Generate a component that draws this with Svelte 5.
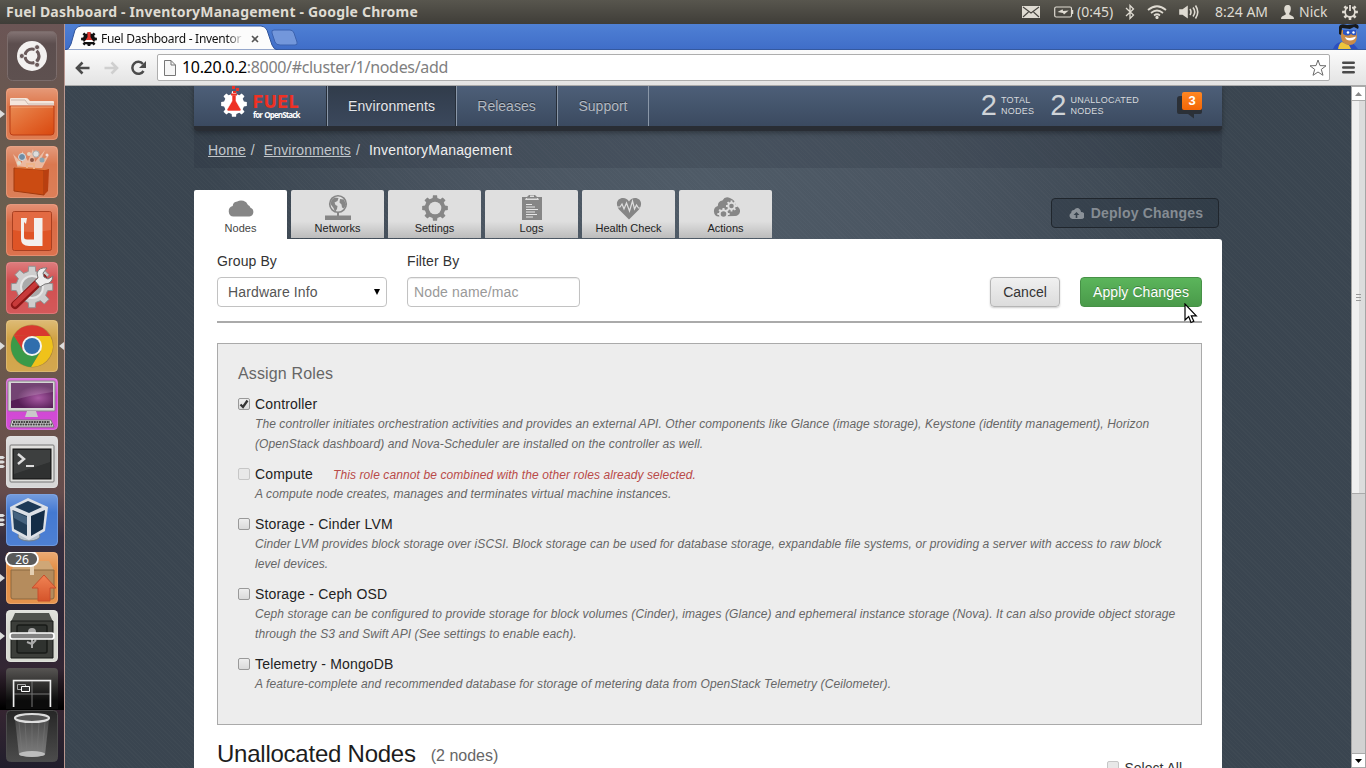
<script>
  const launcher = [
    { id: 'dash' },
    { id: 'files', c: '#dc7143', left: 1 },
    { id: 'store', c: '#d9744a' },
    { id: 'one', c: '#d9663f' },
    { id: 'settings', c: '#d04a4b' },
    { id: 'chrome', c: '#d0a040', left: 1, right: true },
    { id: 'display', c: '#cf3fd2' },
    { id: 'terminal', c: '#d4d4d4', left: 3 },
    { id: 'vbox', c: '#3e75d0', left: 3 },
    { id: 'update', c: '#e3893d', left: 1 },
    { id: 'safe', c: '#d5d7cf', left: 1 }
  ];
  const tabs = ['Nodes', 'Networks', 'Settings', 'Logs', 'Health Check', 'Actions'];
  const roles = [
    { name: 'Controller', checked: true, text: ['The controller initiates orchestration activities and provides an external API. Other components like Glance (image storage), Keystone (identity management), Horizon', '(OpenStack dashboard) and Nova-Scheduler are installed on the controller as well.'] },
    { name: 'Compute', disabled: true, warn: 'This role cannot be combined with the other roles already selected.', text: ['A compute node creates, manages and terminates virtual machine instances.'] },
    { name: 'Storage - Cinder LVM', text: ['Cinder LVM provides block storage over iSCSI. Block storage can be used for database storage, expandable file systems, or providing a server with access to raw block', 'level devices.'] },
    { name: 'Storage - Ceph OSD', text: ['Ceph storage can be configured to provide storage for block volumes (Cinder), images (Glance) and ephemeral instance storage (Nova). It can also provide object storage', 'through the S3 and Swift API (See settings to enable each).'] },
    { name: 'Telemetry - MongoDB', text: ['A feature-complete and recommended database for storage of metering data from OpenStack Telemetry (Ceilometer).'] }
  ];
  // Toothed wheel outline around (cx, cy)
  function gear(cx, cy, ro, ri, n) {
    let d = '';
    const s = (Math.PI * 2) / n;
    for (let i = 0; i < n; i++) {
      const a = i * s - Math.PI / 2;
      [[-0.3, ri], [-0.2, ro], [0.2, ro], [0.3, ri]].forEach(([k, r], j) => {
        d += (i === 0 && j === 0 ? 'M' : 'L') + (cx + r * Math.cos(a + k * s)).toFixed(2) + ' ' + (cy + r * Math.sin(a + k * s)).toFixed(2);
      });
    }
    return d + 'Z';
  }
</script>

{#snippet tile(item)}
  <svg class="tile" width="64" height="52" viewBox="0 0 64 52">
    {#if item.c}
      <rect x="6" y="0" width="52" height="52" rx="4.5" fill={item.c} />
      <rect x="6.5" y=".5" width="51" height="51" rx="4" fill="url(#gloss)" stroke="#fff" stroke-opacity=".22" />
    {/if}
    {#if item.left === 1}<path d="M0 22v8l5-4z" fill="#dcdcdc" />{/if}
    {#if item.left === 3}<path d="M0 20h3l2 1.500-2 1.500H0zM0 24.500h3l2 1.500-2 1.500H0zM0 29h3l2 1.500-2 1.500H0z" fill="#dcdcdc" />{/if}
    {#if item.right}<path d="M64 22v8l-5-4z" fill="#dcdcdc" />{/if}
    {#if item.id === 'dash'}
      <rect x="7.500" y="1.500" width="49" height="49" rx="5" fill="url(#dashg)" stroke="#7b6c6b" />
      <circle cx="32" cy="26" r="15" fill="#f3f1f0" />
      <circle cx="32" cy="26" r="7" fill="none" stroke="#6a5a5a" stroke-width="3.200" stroke-dasharray="12.600 2.060" stroke-dashoffset="-8.360" />
      <g fill="#6a5a5a" stroke="#f3f1f0" stroke-width=".8"><circle cx="21.800" cy="26" r="2.500" /><circle cx="37.100" cy="17.200" r="2.500" /><circle cx="37.100" cy="34.800" r="2.500" /></g>
    {:else if item.id === 'files'}
      <path d="M10 18v-7q0-1 1-1h15q2 0 3 2l1 1h23q1 0 1 1v4z" fill="#f4e6dc" /><path d="M11 12h14l3 4h26" fill="none" stroke="#cbbab0" />
      <path d="M10 18h44v26q0 3-3 3H13q-3 0-3-3z" fill="url(#folder)" stroke="#ba3c14" /><path d="M11 19h42" stroke="#f6a77b" />
    {:else if item.id === 'store'}
      <path d="M18 22l-5-14 9 9 0-12 6 10 5-12 2 13 10-12-5 12 9-7-7 13z" fill="#f5dac8" opacity=".65" />
      <circle cx="22" cy="11" r="3.500" fill="#6d8ca5" stroke="#d9dfe2" /><circle cx="29" cy="8" r="2" fill="#e7d1bc" /><circle cx="36" cy="8" r="3.200" fill="#ddd" stroke="#a9a9a9" /><circle cx="19" cy="17" r="2" fill="#ddc" /><circle cx="42" cy="14" r="2.500" fill="#8ba5b2" /><circle cx="32" cy="14" r="2" fill="#8f5544" /><circle cx="47" cy="9" r="1.500" fill="#edd" />
      <path d="M14 22l30 2v25l-30-4z" fill="#cb4b12" stroke="#a13a0f" /><path d="M44 24l4-1h1l-1 22-4 4z" fill="#b93f10" /><path d="M14 22l5-1.500 30 2.500-5 1z" fill="#e07a40" />
      <path d="M27 22v-4h7v5" fill="none" stroke="#eeb489" stroke-width="2" />
    {:else if item.id === 'one'}
      <rect x="12.500" y="7.500" width="39" height="39" rx="2" fill="#df5426" stroke="#a94021" /><path d="M13 8h38v18q-20 4-38 0z" fill="#fff" opacity=".13" />
      <path d="M21 14h6l-1 6-2-2v15q0 2.500 3 2.500h7V14h8.500v28H29q-8 0-8-7z" fill="#f3f0ee" />
    {:else if item.id === 'settings'}
      <path d={gear(32, 25, 21, 16, 8)} fill="#cecece" stroke="#929292" /><circle cx="32" cy="25" r="11" fill="#aaa" stroke="#e6e6e6" stroke-width="2" />
      <path d="M15 43L43 16" stroke="#8e1717" stroke-width="8" stroke-linecap="round" /><path d="M15 42L36 22" stroke="#c83a3a" stroke-width="5" stroke-linecap="round" />
      <path d="M35 19l5 6 5-3q7 0 8-8l-5 3-4-2-1-4 4-5q-8-1-10 5l1 5z" fill="#eee" stroke="#777" />
    {:else if item.id === 'chrome'}
      <circle cx="32" cy="26" r="21.500" fill="#7a5b24" opacity=".4" />
      <path d="M13.800 15.500A21 21 0 0 1 50.200 16H32z" fill="#d8382f" /><path d="M50.200 16A21 21 0 0 1 31 47l10-16-5-15z" fill="#efc21b" /><path d="M13.800 15.500A21 21 0 0 0 31 47l9-15-13 3z" fill="#3b9a48" /><path d="M13.800 15.500L24 32l8-16h18" fill="#d8382f" />
      <circle cx="32" cy="26" r="10" fill="#f5f5f2" /><circle cx="32" cy="26" r="8" fill="#306ead" />
    {:else if item.id === 'display'}
      <rect x="8" y="3" width="47" height="30" rx="1" fill="#d5d5d5" stroke="#888" /><rect x="11" y="5" width="42" height="25" fill="url(#screen)" /><path d="M11 5h42v9q-23 3-42 9z" fill="#fff" opacity=".17" />
      <path d="M27 33h9l2 6H25z" fill="#c9c9c9" /><path d="M12 42h39l3 7H10z" fill="#ddd" stroke="#777" /><path d="M13 44h37M12 46.500h40" stroke="#444" stroke-width="1.800" stroke-dasharray="2 .6" />
    {:else if item.id === 'terminal'}
      <rect x="10" y="9" width="44" height="37" rx="1" fill="#e0e0dd" stroke="#777" /><rect x="13" y="13" width="38" height="30" fill="#2f3131" stroke="#111" /><path d="M14 14h36v12L14 38z" fill="#fff" opacity=".07" />
      <path d="M18 18l6 5-6 5" fill="none" stroke="#ddd" stroke-width="2.500" /><path d="M26 30h8" stroke="#ddd" stroke-width="2" />
    {:else if item.id === 'vbox'}
      <ellipse cx="29" cy="42" rx="11" ry="5" fill="#b8c3ce" stroke="#707d89" />
      <path d="M10 13L28 4l20 9-3 24-16 9-17-9z" fill="#dce0e6" /><path d="M15 13l13-6 14 6-13 6z" fill="#1d3a57" /><path d="M12.500 16L27 22v20l-13-7z" fill="#223d57" /><path d="M31 22l14-6-2 19-12 7z" fill="#142d46" /><path d="M13 17l14 6v8l-13-7z" fill="#5d7c98" opacity=".6" />
    {:else if item.id === 'update'}
      <path d="M11 18l7-9h31l5 9z" fill="#cfa777" /><path d="M11 18h43v27q0 2-2 2H13q-2 0-2-2z" fill="#b58c5d" stroke="#8b6841" /><path d="M30 9h4v14h-4z" fill="#e4cfb2" />
      <path d="M44 23l12 13h-6v13H38V36h-6z" fill="url(#arrow)" stroke="#c84d2c" />
      <rect x="6" y="0" width="32" height="14" rx="7" fill="#5a5a5a" stroke="#fff" stroke-width="1.800" /><text x="22" y="11.500" text-anchor="middle" class="count">26</text>
    {:else if item.id === 'safe'}
      <path d="M15 3h34l4 9H11z" fill="#50534e" /><path d="M11 11h42v37H11z" fill="#3c3e3a" stroke="#191b19" /><rect x="17" y="15" width="30" height="28" rx="2" fill="#2f322f" stroke="#191b19" stroke-width="1.500" />
      <path d="M32 20v18M27 32l5 2 4-4" fill="none" stroke="#aaa" stroke-width="2" /><circle cx="32" cy="22" r="4" fill="#aaa" /><rect x="10" y="23" width="44" height="6" rx="2.500" fill="#828282" stroke="#fff" stroke-width="1.700" />
    {/if}
  </svg>
{/snippet}

{#snippet tabIcon(name)}
  <svg width="28" height="28" viewBox="0 0 28 28" fill="#868686">
    {#if name === 'Nodes'}
      <path d="M6 23a5.300 5.300 0 0 1-.8-10.400A5 5 0 0 1 9.700 8a7.500 7.500 0 0 1 10.800 3.600A5 5 0 0 1 23 14.200 4.600 4.600 0 0 1 22 23z" transform="translate(.5 -.5)" />
    {:else if name === 'Networks'}
      <circle cx="14" cy="10" r="8.300" fill="none" stroke="#868686" stroke-width="1.600" />
      <path d="M7.500 6l3-2.500 4 .5-1 3-3 1.500 1 2.500 2 1-.5 3-2 3-1.500-4-3-4zM16 5l4 .5 2 5-2 4-2-1-.5-3-2-2z" />
      <path d="M13 18h2v3.500h12v4.500H1v-4.500h12z" />
    {:else if name === 'Settings'}
      <path d={gear(14, 14, 13, 10.300, 8)} /><circle cx="14" cy="14" r="6.300" fill="#dedede" />
    {:else if name === 'Logs'}
      <path d="M4 3h5l2-2h6l2 2h5v23H4z" /><path d="M8 4h12l1 2H7zM12 1.500h4v2h-4z" fill="#dedede" /><path d="M9 3h10v1.500H9z" />
      <path d="M8 10.500h6M8 13h9M8 15.500h12M8 18h9M8 20.500h11M8 23h7" stroke="#e6e6e6" stroke-width="1.200" />
    {:else if name === 'Health Check'}
      <path d="M14 25.500L4 15.500C-.5 9 3 4 8 4q4 0 6 3.500Q16 4 20 4c5 0 8.500 5 4 11.500z" /><path d="M2 13l3 0 2-3 2 5 2.500-6 3 8 3-10 2 8 2-4 2 3h3" fill="none" stroke="#dedede" stroke-width="1.200" />
    {:else}
      <path d="M6 23a5.300 5.300 0 0 1-.8-10.400A5 5 0 0 1 9.700 7a6 6 0 0 1 7.500-2.500q6 2 5.500 8A5 5 0 0 1 22 22.500z" transform="translate(.7 -.5)" />
      <path d={gear(19.500, 12, 5.600, 4.200, 8)} fill="#dedede" /><circle cx="19.500" cy="12" r="2.300" fill="#868686" />
      <path d={gear(11.500, 20, 6.200, 4.700, 8)} fill="#dedede" /><circle cx="11.500" cy="20" r="2.800" fill="#868686" />
    {/if}
  </svg>
{/snippet}

<div class="desktop">
  <header class="panelbar">
    <strong>Fuel Dashboard - InventoryManagement - Google Chrome</strong>
    <div class="tray">
      <svg width="18" height="12" viewBox="0 0 18 12"><path d="M0 0h18v12H0z" fill="#dfdbd2" /><path d="M1 1l8 6 8-6M1 11l5.500-5M17 11l-5.500-5" fill="none" stroke="#46443f" stroke-width="1.100" /></svg>
      <svg class="bat" width="20" height="12" viewBox="0 0 20 12" fill="none" stroke="#dfdbd2"><rect x=".7" y="1" width="16.800" height="10" rx="1.500" stroke-width="1.200" /><path d="M18.500 4v4" stroke-width="1.500" /><path d="M3.500 6l5-2.700.7 1.700 5.500-.5L10 8.500 9 7z" fill="#dfdbd2" stroke="none" /></svg>
      <span class="left">(0:45)</span>
      <svg class="bt" width="10" height="16" viewBox="0 0 10 16"><path d="M1 4l7.500 7L5 14.500v-13L8.500 5 1 12" fill="none" stroke="#dfdbd2" stroke-width="1.300" /></svg>
      <svg class="wifi" width="20" height="14" viewBox="0 0 20 14" fill="none" stroke="#dfdbd2" stroke-width="1.700"><path d="M1 5q9-7.500 18 0M4 8q6-5 12 0M7 10.500q3-2.500 6 0" /><circle cx="10" cy="12.400" r=".8" fill="#dfdbd2" /></svg>
      <svg class="vol" width="20" height="16" viewBox="0 0 20 16" fill="none" stroke="#dfdbd2" stroke-width="1.600"><path d="M1 6h3l4-3v10l-4-3H1z" fill="#dfdbd2" /><path d="M11 5q2 3 0 6M14 3.500q3.500 4.500 0 9M16.500 1.500q4.500 6.500 0 13" /></svg>
      <span class="clock">8:24 AM</span>
      <svg class="usr" width="13" height="14" viewBox="0 0 13 14"><path d="M6.500 0c3 0 3.500 2 3.300 4.500Q9.500 7 8.300 8v1.500l3.700 2q1 .7 1 2.500H0q0-1.800 1-2.500l3.700-2V8Q3.500 7 3.200 4.500 3 0 6.500 0z" fill="#dfdbd2" /></svg>
      <span class="nick">Nick</span>
      <svg class="pow" width="16" height="16" viewBox="0 0 16 16"><path d={gear(8, 8, 8, 5.800, 8)} fill="#dfdbd2" /><circle cx="8" cy="8" r="4" fill="#46443f" /><path d="M6 0h4v6H6z" fill="#46443f" /><path d="M8 1v6" stroke="#dfdbd2" stroke-width="1.800" /></svg>
    </div>
  </header>

  <div class="work">
    <nav class="launcher">
      <svg width="0" height="0" class="defs"><defs>
        <linearGradient id="gloss" x2="0" y2="1"><stop stop-color="#fff" stop-opacity=".28" /><stop offset=".35" stop-color="#fff" stop-opacity=".03" /><stop offset="1" stop-color="#fff" stop-opacity=".08" /></linearGradient>
        <linearGradient id="dashg" x2="0" y2="1"><stop stop-color="#847474" /><stop offset=".25" stop-color="#5c4e4e" /><stop offset="1" stop-color="#5e5150" /></linearGradient>
        <linearGradient id="folder" x2="1" y2="1"><stop stop-color="#e98a52" /><stop offset=".5" stop-color="#e2682f" /><stop offset="1" stop-color="#d9480f" /></linearGradient>
        <radialGradient id="screen" cx=".65" cy=".6"><stop stop-color="#a85aa3" /><stop offset="1" stop-color="#571e57" /></radialGradient>
        <linearGradient id="arrow" x2="0" y2="1"><stop stop-color="#f08354" /><stop offset="1" stop-color="#d5542a" /></linearGradient>
        <linearGradient id="dark" x2="0" y2="1"><stop stop-color="#575553" /><stop offset=".8" stop-color="#0b0b0b" /></linearGradient>
        <linearGradient id="bin" x2="0" y2="1"><stop stop-color="#262626" /><stop offset="1" stop-color="#4c4c4c" /></linearGradient>
        <linearGradient id="glass" x2="0" y2="1"><stop stop-color="#4a4a4a" /><stop offset="1" stop-color="#808080" /></linearGradient>
      </defs></svg>
      {#each launcher as item}{@render tile(item)}{/each}
      <div class="folded">
        <svg class="tile" width="64" height="41" viewBox="0 0 64 41"><path d="M6 41V4q0-4 4-4h44q4 0 4 4v37z" fill="url(#dark)" /><path d="M14 39V13h36v26M32 13v26M14 26h36" fill="none" stroke="#777" /><path d="M13.500 39V12.500h37V39" fill="none" stroke="#eee" stroke-width="1.500" /><path d="M17.500 16.500h8v5h-8z" fill="none" stroke="#aaa" /><path d="M21.500 18.500h8v5h-8z" fill="#333" stroke="#fff" /></svg>
      </div>
      <svg class="tile" width="64" height="52" viewBox="0 0 64 52"><rect x="6.500" y=".5" width="51" height="51" rx="4" fill="url(#bin)" stroke="#4b4b4b" /><path d="M15 9h34l-4 36q-13 4-26 0z" fill="url(#glass)" /><path d="M19 12l3 32M25 12l2 32M32 12v33M39 12l-2 32M45 12l-3 32" stroke="#777" stroke-opacity=".5" /><ellipse cx="32" cy="44" rx="13" ry="3" fill="#bdbdbd" /><ellipse cx="32" cy="8" rx="17" ry="4" fill="#555" stroke="#ddd" stroke-width="2.200" /></svg>
    </nav>

    <div class="browser">
      <div class="strip">
        <svg class="tabshape" width="300" height="26" viewBox="0 0 300 26"><path d="M0 26q4 0 6-6L10 6q2-4 6-4h180q4 0 6 4l5 15q2 5 6 5z" fill="#fcfcfc" stroke="#2f539a" stroke-width="1" /><path d="M207 9q-1-3 2-3h16q3 0 4 3l3 9q1 3-2 3h-15q-4 0-5-3z" fill="#7397db" stroke="#3c62af" /></svg>
        <div class="tabtext">
          <svg width="16" height="14" viewBox="0 0 16 14"><path d={gear(8, 7, 8, 6, 8)} fill="#111" /><path d="M6.500 0h3v5l3 5h-9l3-5z" fill="#e0342d" /><path d="M3 10l2-2h6l2 2z" fill="#fff" /></svg>
          <span>Fuel Dashboard - Inventor</span>
          <svg width="8" height="8" viewBox="0 0 8 8"><path d="M1 1l6 6M7 1L1 7" stroke="#555" stroke-width="1.600" /></svg>
        </div>
        <svg class="hero" width="28" height="25" viewBox="0 0 28 25"><path d="M1 25q2-6 8-7l10-1 7 8z" fill="#2b4fc1" /><path d="M6 25q1-6 4-7l7 3 2 4z" fill="#edc63c" /><path d="M8 6h16l1 7q-1 8-7 8-8 0-9-8z" fill="#c98b48" /><path d="M7 10V3q1-4 8-2l9-1q4 1 2 5l-4-2-4 2-8-1-1 7z" fill="#17191c" /><path d="M11 6h13v5q-3 1-5-1-3 3-8 0z" fill="#2a55c4" /><circle cx="16" cy="8.500" r="1.300" fill="#fff" /><circle cx="21.500" cy="8.500" r="1.200" fill="#fff" /><path d="M13 13q5 2 11-.5-1 4-6 4-4 0-5-3.500z" fill="#fff" /></svg>
      </div>

      <div class="toolbar">
        <svg width="16" height="14" viewBox="0 0 16 14"><path d="M7.500 1.500L2 7l5.500 5.500M2 7h12.500" fill="none" stroke="#4b4b4b" stroke-width="2.600" /></svg>
        <svg width="16" height="14" viewBox="0 0 16 14"><path d="M8.500 1.500L14 7l-5.500 5.500M14 7H1.500" fill="none" stroke="#cfcfcf" stroke-width="2.600" /></svg>
        <svg width="16" height="16" viewBox="0 0 16 16"><path d="M12.500 11A6 6 0 1 1 12 4" fill="none" stroke="#4b4b4b" stroke-width="2.500" /><path d="M15 1v7H8z" fill="#4b4b4b" /></svg>
        <div class="omni">
          <svg width="12" height="16" viewBox="0 0 12 16"><path d="M.5.5H7L11.500 5v10.500H.5z" fill="#f6f6f6" stroke="#777" /><path d="M7 .5V5h4.500" fill="none" stroke="#777" /></svg>
          <span><b>10.20.0.2</b>:8000/#cluster/1/nodes/add</span>
          <svg class="star" width="18" height="18" viewBox="0 0 18 18"><path d="M9 1l2 5.600 6 .2-4.700 3.600 1.700 5.900L9 13l-5 3.300 1.700-5.900L1 6.800l6-.2z" fill="#fff" stroke="#6a6a6a" stroke-linejoin="round" /></svg>
        </div>
        <svg class="menu" width="13" height="13" viewBox="0 0 13 13"><path d="M1.300 1.800h10.400M1.300 6.500h10.400M1.300 11.200h10.400" stroke="#4a4a4a" stroke-width="2.600" stroke-linecap="round" /></svg>
      </div>

      <div class="view">
        <main class="page">
          <div class="container">
            <div class="navbar">
              <div class="brand">
                <svg width="28" height="34" viewBox="0 0 28 34"><path d={gear(14, 18, 13, 10.200, 8)} fill="#fff" /><path d="M12 9h4v6l5 8.500q0 1.500-1.500 1.500h-11q-1.500 0-1.500-1.500l5-8.500z" fill="#ee3124" stroke="#fff" stroke-width=".6" /><path d="M13 5h3v2h-3zM16 2h3v3h-3zM12 0h3v3h-3zM11 7.500h6v2h-6z" fill="#ee3124" /></svg>
                <div class="word"><b>FUEL</b><small>for OpenStack</small></div>
              </div>
              <a class="on" style:width="129px">Environments</a>
              <a style:width="101px">Releases</a>
              <a style:width="92px">Support</a>
              <div class="stats">
                <span class="num">2</span><span class="lbl">TOTAL<br />NODES</span>
                <span class="num n2">2</span><span class="lbl">UNALLOCATED<br />NODES</span>
              </div>
              <div class="notes">
                <svg width="27" height="27" viewBox="0 0 27 27"><path d="M3 4h20q2 0 2 2v14q0 2-2 2h-6v4.500L11 22H2q-2 0-2-2V7q0-3 3-3z" fill="#2b3037" /></svg>
                <b>3</b>
              </div>
            </div>
            <div class="crumbs"><u>Home</u><i>/</i><u>Environments</u><i>/</i><span>InventoryManagement</span></div>

            <div class="tabrow">
              {#each tabs as t, i}
                <div class="tab" class:active={i === 0}>{@render tabIcon(t)}<span>{t}</span></div>
              {/each}
              <div class="deploy">
                <svg width="15" height="11" viewBox="0 0 15 11"><path d="M3.500 11A3.200 3.200 0 0 1 2.200 5 3 3 0 0 1 5 2Q8-1.500 11 1.500q1 1.200 1 2.500A3.500 3.500 0 0 1 12 11z" fill="#8b9299" /><path d="M7.500 4l3 3H8.300v3H6.700V7H4.500z" fill="#36414c" /></svg>
                <b>Deploy Changes</b>
              </div>
            </div>

            <section class="content">
              <div class="controls">
                <div class="field"><label for="group">Group By</label><div class="select" id="group">Hardware Info<svg width="8" height="6" viewBox="0 0 8 6"><path d="M1 0h6L4 6z" fill="#000" /></svg></div></div>
                <div class="field"><label for="filter">Filter By</label><div class="input" id="filter">Node name/mac</div></div>
                <div class="btn">Cancel</div>
                <div class="btn green">Apply Changes</div>
              </div>

              <div class="roles">
                <h3>Assign Roles</h3>
                {#each roles as r}
                  <div class="role">
                    <div class="cb" class:off={r.disabled}>{#if r.checked}<svg width="10" height="10" viewBox="0 0 10 10"><path d="M1.500 5.500L4 8l4.500-6.500" fill="none" stroke="#333" stroke-width="2.300" /></svg>{/if}</div>
                    <div>
                      <div class="name">{r.name}{#if r.warn}<em>{r.warn}</em>{/if}</div>
                      {#each r.text as line}<div class="desc">{line}</div>{/each}
                    </div>
                  </div>
                {/each}
              </div>

              <div class="group">
                <h2>Unallocated Nodes</h2><span>(2 nodes)</span>
                <div class="all"><div class="cb off"></div>Select All</div>
              </div>
            </section>
          </div>
        </main>
        <div class="scroll">
          <div class="arrow"><svg width="7" height="4" viewBox="0 0 7 4"><path d="M0 4h7L3.500 0z" fill="#888" /></svg></div>
          <div class="thumb"><svg width="5" height="7" viewBox="0 0 5 7"><path d="M0 .5h5M0 3.500h5M0 6.500h5" stroke="#999" /></svg></div>
          <div class="track"></div>
          <div class="arrow"><svg width="7" height="4" viewBox="0 0 7 4"><path d="M0 0h7L3.500 4z" fill="#000" /></svg></div>
        </div>
      </div>
    </div>
  </div>
  <svg class="pointer" width="14" height="21" viewBox="0 0 14 21"><path d="M1 1v16l3.700-3.500L7 19.500l2.800-1.200-2.500-5.500h5z" fill="#fff" stroke="#000" stroke-width="1.200" /></svg>
</div>

<style>
  :global(body) { margin: 0; overflow: hidden; }
  .desktop { width: 1366px; height: 768px; overflow: hidden; position: relative; display: flex; flex-direction: column; font: 14px/20px "Liberation Sans", Arial, sans-serif; color: #333; }
  .desktop * { box-sizing: border-box; }
  svg { display: block; flex: none; }

  .panelbar { flex: none; height: 24px; display: flex; justify-content: space-between; align-items: center; padding: 0 8px 0 6px; background: linear-gradient(#58564e, #3f3d38); color: #dfdbd2; font: 15px/24px "Noto Sans", sans-serif; white-space: nowrap; }
  .panelbar strong { font-size: 14px; letter-spacing: .19px; }
  .tray { display: flex; align-items: center; }
  .bat { margin-left: 14px; }
  .left { width: 38px; margin-left: 3px; }
  .bt { margin-left: 10px; }
  .wifi { margin-left: 12px; }
  .vol { margin-left: 12px; }
  .clock { width: 54px; margin-left: 16px; }
  .usr { margin-left: 12px; }
  .nick { width: 31px; margin-left: 5px; }
  .pow { margin-left: 12px; }
  .left, .clock, .nick { font-size: 14px; }

  .work { flex: 1; min-height: 0; display: flex; }
  .launcher { width: 65px; flex: none; padding-top: 6px; display: flex; flex-direction: column; gap: 6px; background: linear-gradient(#6b5555, #68584f 12%, #6c624f 33%, #6b544b 52%, #654c4c 63%, #372f3f 69%, #2d2636 80%, #382632 91%, #211e2c); border-right: 1px solid #b99790; }
  .defs { position: absolute; }
  .folded { height: 42px; margin-bottom: -6px; background: linear-gradient(transparent, #000 95%); }
  .count { font: 12px "Noto Sans", sans-serif; fill: #fff; }

  .browser { flex: 1; min-width: 0; display: flex; flex-direction: column; }
  .strip { flex: none; height: 26px; position: relative; display: flex; background: linear-gradient(#4f80d5, #406ec8); border-bottom: 1px solid #35599f; }
  .tabshape { position: absolute; left: 0; top: 0; }
  .tabtext { position: relative; display: flex; align-items: center; height: 28px; margin-top: 1px; padding-left: 16px; font: 12px/28px "Noto Sans", sans-serif; color: #111; }
  .tabtext span { margin: 0 7px 0 4px; width: 143px; overflow: hidden; white-space: nowrap; letter-spacing: -.28px; -webkit-mask-image: linear-gradient(90deg, #000 88%, transparent); mask-image: linear-gradient(90deg, #000 88%, transparent); }
  .hero { margin-left: auto; margin-right: 6px; }
  .toolbar { flex: none; height: 36px; display: flex; align-items: center; padding: 0 11px 0 10px; background: linear-gradient(#fbfbfb, #e3e3e3); border-bottom: 1px solid #aaa; gap: 12px; }
  .omni { flex: 1; height: 27px; margin-left: -2px; border: 1px solid #adadad; border-radius: 2px; background: #fff; display: flex; align-items: center; padding: 0 2px 0 6px; font: 16px/24px "Noto Sans", sans-serif; letter-spacing: -.33px; color: #808080; }
  .omni span { margin: -1px 0 0 6px; flex: 1; }
  .omni b { font-weight: 400; color: #000; }

  .view { flex: 1; min-height: 0; display: flex; }
  .page { flex: 1; overflow: hidden; display: flex; justify-content: center; background: repeating-linear-gradient(45deg, rgba(255,255,255,.018) 0 1px, transparent 1px 3px), radial-gradient(ellipse 500px 520px at 50% 110px, #4f5b67, #4a5561 45%, #3a4550 100%); }
  .container { width: 1028px; flex: none; }
  .navbar { height: 45px; display: flex; background: linear-gradient(#4d5f78, #3b4a60); border-bottom: 5px solid #292d34; border-radius: 0 0 3px 3px; box-shadow: 0 2px 5px rgba(0,0,0,.35); }
  .brand { width: 133px; padding: 0 0 0 26px; display: flex; border-right: 1px solid #262e39; }
  .word { padding: 9px 0 0 5px; width: 60px; white-space: nowrap; }
  .word b { display: block; font: 800 17px/15px Inter, sans-serif; letter-spacing: 1.1px; color: #ee3124; }
  .word small { display: block; font: 700 8px/10px "Open Sans", sans-serif; letter-spacing: -.85px; word-spacing: .8px; color: #fff; }
  .navbar a { border-left: 1px solid #8a97a8; border-right: 1px solid #262e39; text-align: center; line-height: 40px; color: #b3b9c1; text-shadow: 0 -1px #29303a; }
  .navbar a:last-of-type { border-right-color: #8a97a8; }
  .navbar a.on { color: #e4e6e9; background: linear-gradient(#313c4b, #3b485c); letter-spacing: .13px; }
  .stats { margin-left: auto; display: flex; align-items: center; color: #d7dadd; height: 37px; }
  .num { font-size: 29px; line-height: 36px; color: #cfd3d7; }
  .lbl { font-size: 9px; line-height: 11px; margin: 2px 0 0 4px; letter-spacing: .25px; }
  .n2 { margin-left: 16px; }
  .notes { width: 27px; margin: 6px 18px 0 38px; position: relative; }
  .notes b { position: absolute; left: 5px; top: 0; width: 20px; height: 18px; border-radius: 2px; background: linear-gradient(#ff8722, #f36606); color: #fff; font-size: 13px; line-height: 18px; text-align: center; }
  .crumbs { height: 37px; display: flex; padding-left: 14px; line-height: 39px; background: rgba(30,36,44,.15); color: #eee; letter-spacing: .12px; }
  .crumbs u { color: #c1c6cb; }
  .crumbs i { font-style: normal; margin: 0 9px 0 5px; color: #c1c6cb; }
  .crumbs span { letter-spacing: .2px; }

  .tabrow { margin-top: 22px; display: flex; gap: 4px; height: 49px; }
  .tab { width: 93px; height: 48px; border-radius: 2px 2px 0 0; background: linear-gradient(#dfdfdf 0 65%, #bcbcbc); display: flex; flex-direction: column; align-items: center; padding-top: 4px; font-size: 11px; line-height: 13px; color: #222; }
  .tab.active { background: #fff; height: 49px; color: #444; }
  .deploy { margin: 8px 3px 0 auto; width: 168px; height: 30px; border: 1px solid #20262d; border-radius: 4px; background: rgba(35,45,56,.35); display: flex; align-items: center; justify-content: center; gap: 7px; padding-left: 2px; color: #858c93; letter-spacing: .2px; }

  .content { height: 600px; background: #fff; border-radius: 0 3px 0 0; padding: 12px 20px 0 23px; }
  .controls { height: 72px; display: flex; align-items: flex-start; border-bottom: 2px solid #aaa; }
  .field { margin-right: 20px; }
  .field label { display: block; margin-bottom: 6px; letter-spacing: .1px; }
  .select, .input { height: 30px; border: 1px solid #c2c2c2; border-radius: 4px; line-height: 28px; padding: 0 6px; letter-spacing: .14px; }
  .select { width: 170px; padding: 0 5px 0 10px; display: flex; align-items: center; justify-content: space-between; color: #555; }
  .input { width: 173px; color: #999; box-shadow: inset 0 1px 1px rgba(0,0,0,.08); }
  .btn { margin: 26px 20px 0 auto; width: 70px; height: 30px; border: 1px solid #b5b5b5; border-radius: 4px; background: linear-gradient(#f0f0f0, #dcdcdc); text-align: center; line-height: 28px; box-shadow: 0 1px 2px rgba(0,0,0,.2); }
  .btn.green { width: 122px; margin: 26px 0 0; background: linear-gradient(#5bb55b, #4a9a4a); border-color: #479147; color: #fff; text-shadow: 0 -1px rgba(0,0,0,.25); box-shadow: none; letter-spacing: .08px; }

  .roles { margin-top: 20px; height: 382px; border: 1px solid #aaa; background: #ededed; padding: 20px 20px 19px; }
  .roles h3 { margin: 0 0 10px; font-size: 16px; font-weight: 400; line-height: 20px; letter-spacing: .15px; color: #666; }
  .role { display: flex; margin-bottom: 10px; white-space: nowrap; }
  .cb { flex: none; width: 12px; height: 12px; margin: 4px 5px 0 0; border: 1px solid #999; border-radius: 2px; background: linear-gradient(#eee, #dadada); }
  .cb.off { border-color: #c6c6c6; background: #e8e8e8; }
  .name { height: 20px; color: #222; letter-spacing: .17px; }
  .name em { margin-left: 20px; font-size: 12px; line-height: 16px; letter-spacing: .1px; color: #b94a48; }
  .desc { font-size: 12px; font-style: italic; letter-spacing: .09px; color: #666; }
  .group { display: flex; padding-top: 14px; }
  .group h2 { margin: 0; font-size: 24px; font-weight: 400; line-height: 30px; letter-spacing: -.24px; color: #1d1d1d; }
  .group span { font-size: 16px; line-height: 33px; margin-left: 15px; color: #666; }
  .all { margin: 19px 20px 0 auto; display: flex; height: 10px; }
  .all .cb { margin-top: 3px; }

  .scroll { width: 15px; flex: none; display: flex; flex-direction: column; background: #d2d2d2; border: solid #a5a5a5; border-width: 0 1px; }
  .scroll .arrow { height: 15px; flex: none; background: #fff; border-bottom: 1px solid #aaa; border-top: 1px solid #aaa; display: flex; align-items: center; justify-content: center; }
  .scroll .thumb { height: 393px; background: linear-gradient(90deg, #f0f0f0 50%, #dcdcdc 52%); border-bottom: 1px solid #aaa; display: flex; align-items: center; justify-content: center; }
  .track { flex: 1; }
  .pointer { position: absolute; left: 1184px; top: 303px; }
</style>
